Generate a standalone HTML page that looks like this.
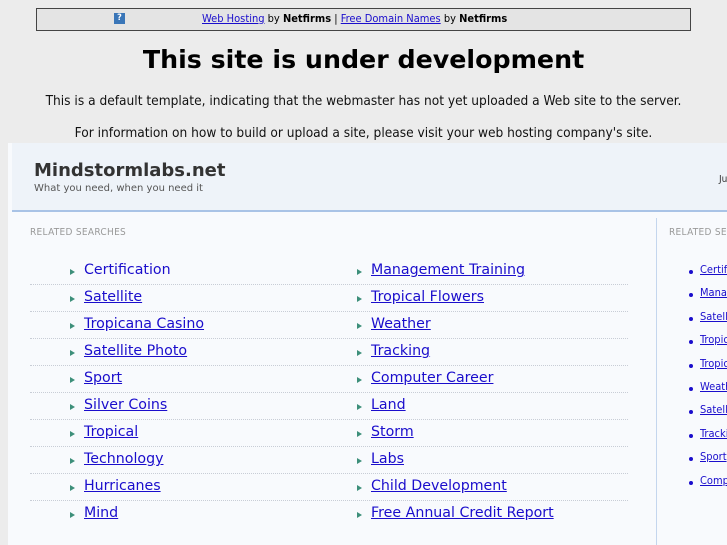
<!DOCTYPE html>
<html><head><meta charset="utf-8"><style>
html,body{overflow:hidden}
body{margin:0;width:727px;height:545px;background:#ececec;font-family:"DejaVu Sans Condensed","DejaVu Sans",sans-serif;position:relative}
.a{position:absolute;white-space:nowrap}
a{color:#1a0dcc;text-decoration:underline}
.bar{left:36px;top:8px;width:653px;height:21px;border:1px solid #444;background:#e4e4e4;font-size:11px;line-height:20px}
.q{position:absolute;left:77px;top:4px;width:11px;height:11px;background:#3a76b8;color:#fff;font-size:9px;line-height:11px;font-weight:bold;text-align:center}
h1{position:absolute;left:0;width:727px;top:45px;margin:0;text-align:center;font-family:"DejaVu Sans",sans-serif;font-size:25.3px;font-weight:bold;color:#000}
.p{left:0;width:727px;text-align:center;font-size:13.6px;color:#111}
.frame{position:absolute;left:8px;top:143px;width:719px;height:402px;background:#f8fafd;overflow:hidden}
.hdr{position:absolute;left:4px;top:0;width:715px;height:67px;background:#eef3f9;border-bottom:2px solid #a9c3e6}
.rs{font-size:10px;color:#999;letter-spacing:.3px}
.l{font-size:14.2px;font-family:"DejaVu Sans",sans-serif}
.arr{position:absolute;width:0;height:0;border-left:5px solid #3d8f7a;border-top:3px solid transparent;border-bottom:3px solid transparent}
.sep{position:absolute;left:30px;width:598px;border-top:1px dotted #c8cdd6}
.s{font-size:11px}
.dot{position:absolute;width:4px;height:4px;border-radius:2px;background:#1a0dcc}
#clip{position:absolute;left:0;top:0;width:727px;height:545px;overflow:hidden}
</style></head><body>
<div class="a bar"><span class="q">?</span><span style="position:absolute;left:165px"><a href="#">Web Hosting</a> by <b>Netfirms</b> | <a href="#">Free Domain Names</a> by <b>Netfirms</b></span></div>
<h1>This site is under development</h1>
<div class="a p" style="top:93px">This is a default template, indicating that the webmaster has not yet uploaded a Web site to the server.</div>
<div class="a p" style="top:125px">For information on how to build or upload a site, please visit your web hosting company's site.</div>
<div class="frame"><div class="hdr"></div></div>
<div id="clip">
<div class="a" style="left:34px;top:160px;font-size:18px;font-weight:bold;font-family:'DejaVu Sans',sans-serif;color:#333">Mindstormlabs.net</div>
<div class="a" style="left:34px;top:183px;font-size:10px;font-family:'DejaVu Sans',sans-serif;color:#555">What you need, when you need it</div>
<div class="a" style="left:719px;top:174px;font-size:10px;color:#333">Ju</div>
<div class="a" style="left:656px;top:218px;height:327px;border-left:1px solid #c4d6ee"></div>
<div class="a rs" style="left:30px;top:227px">RELATED SEARCHES</div>
<div class="a rs" style="left:669px;top:227px">RELATED SEARCHES</div>
<div id="list"></div>
</div>
<script>
var L=["Certification","Satellite","Tropicana Casino","Satellite Photo","Sport","Silver Coins","Tropical","Technology","Hurricanes","Mind"];
var R=["Management Training","Tropical Flowers","Weather","Tracking","Computer Career","Land","Storm","Labs","Child Development","Free Annual Credit Report"];
var S=["Certification","Management","Satellite","Tropical","Tropicana","Weather","Satellite","Tracking","Sport","Computer"];
var h="";
for(var i=0;i<10;i++){var y=262+i*27;
h+='<div class="arr" style="left:70px;top:'+(y+7)+'px"></div>';
h+='<div class="a l" style="left:84px;top:'+y+'px">'+(i==0?'<a style="text-decoration:none">':'<a>')+L[i]+'</a></div>';
h+='<div class="arr" style="left:357px;top:'+(y+7)+'px"></div>';
h+='<div class="a l" style="left:371px;top:'+y+'px"><a>'+R[i]+'</a></div>';
if(i<9)h+='<div class="sep" style="top:'+(y+22)+'px"></div>';
var z=263+i*23.4;
h+='<div class="dot" style="left:689px;top:'+(z+7)+'px"></div>';
h+='<div class="a s" style="left:700px;top:'+z+'px"><a>'+S[i]+'</a></div>';}
document.getElementById("list").innerHTML=h;
</script>
</body></html>
